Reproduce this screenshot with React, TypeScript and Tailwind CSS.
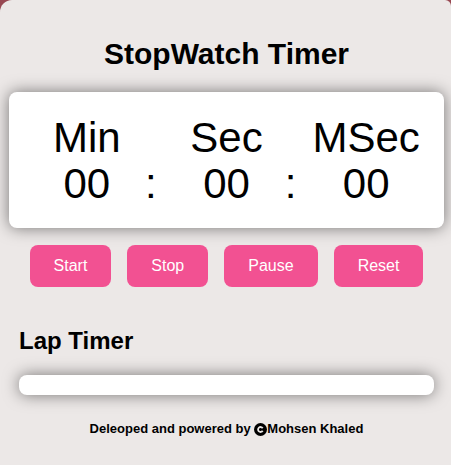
import { useEffect, useRef, useState } from "react";

const pad = (n: number) => String(n).padStart(2, "0");

function Unit({ label, value, separator }: { label: string; value: string; separator?: boolean }) {
  return (
    <div className="text-center text-[42px] leading-[46px]">
      <div>{label}</div>
      <div className="grid grid-cols-[1fr_auto_1fr]">
        <span />
        <span>{value}</span>
        <span className="text-right">{separator ? ":" : ""}</span>
      </div>
    </div>
  );
}

function CopyrightIcon() {
  return (
    <svg viewBox="0 0 26 26" className="size-[13px]" role="img" aria-label="Copyright">
      <circle cx="13" cy="13" r="13" fill="currentColor" />
      <path
        d="M17.4 10.4A5 5 0 1 0 17.4 15.6"
        fill="none"
        stroke="#ece8e7"
        strokeWidth="3.6"
      />
    </svg>
  );
}

const buttonClass =
  "h-[42px] cursor-pointer rounded-lg bg-[#f25192] px-6 text-base text-white hover:bg-[#e04382]";

export default function App() {
  const [time, setTime] = useState(0);
  const [running, setRunning] = useState(false);
  const [laps, setLaps] = useState<number[]>([]);
  const startedAt = useRef(0);

  useEffect(() => {
    if (!running) return;
    const id = setInterval(() => setTime(Date.now() - startedAt.current), 10);
    return () => clearInterval(id);
  }, [running]);

  const start = () => {
    startedAt.current = Date.now() - time;
    setRunning(true);
  };
  const stop = () => {
    if (running) setLaps([...laps, time]);
    setRunning(false);
    setTime(0);
  };
  const reset = () => {
    setRunning(false);
    setTime(0);
    setLaps([]);
  };

  const parts = (t: number) => [
    pad(Math.floor(t / 60000)),
    pad(Math.floor(t / 1000) % 60),
    pad(Math.floor(t / 10) % 100),
  ];
  const [min, sec, msec] = parts(time);

  return (
    <div className="min-h-screen bg-[#984852] font-['Liberation_Sans',Arial,sans-serif] text-black">
      <main className="min-h-screen rounded-tl-xl rounded-tr-md bg-[#ece8e7] pt-9 pr-[7px] pb-6 pl-[9px]">
        <h1 className="text-center text-[30px] leading-9 font-bold">StopWatch Timer</h1>

        <section className="mt-5 grid grid-cols-3 rounded-lg bg-white px-2 pt-[23px] pb-[21px] shadow-[0_0_16px_rgba(0,0,0,0.5)]">
          <Unit label="Min" value={min} separator />
          <Unit label="Sec" value={sec} separator />
          <Unit label="MSec" value={msec} />
        </section>

        <div className="mt-[17px] flex flex-wrap justify-center gap-4">
          <button type="button" className={buttonClass} onClick={start}>Start</button>
          <button type="button" className={buttonClass} onClick={stop}>Stop</button>
          <button type="button" className={buttonClass} onClick={() => setRunning(false)}>Pause</button>
          <button type="button" className={buttonClass} onClick={reset}>Reset</button>
        </div>

        <section className="mt-10 px-[10px]">
          <h2 className="text-2xl leading-7 font-bold">Lap Timer</h2>
          <ul className="mt-5 rounded-lg bg-white p-[10px] shadow-[0_0_16px_rgba(0,0,0,0.5)]">
            {laps.map((lap, i) => (
              <li key={i}>{parts(lap).join(" : ")}</li>
            ))}
          </ul>
        </section>

        <footer className="mt-[26px] flex items-center justify-center text-[13px] leading-4 font-bold">
          <span className="whitespace-pre">Deleoped and powered by </span>
          <CopyrightIcon />
          <span>Mohsen Khaled</span>
        </footer>
      </main>
    </div>
  );
}
